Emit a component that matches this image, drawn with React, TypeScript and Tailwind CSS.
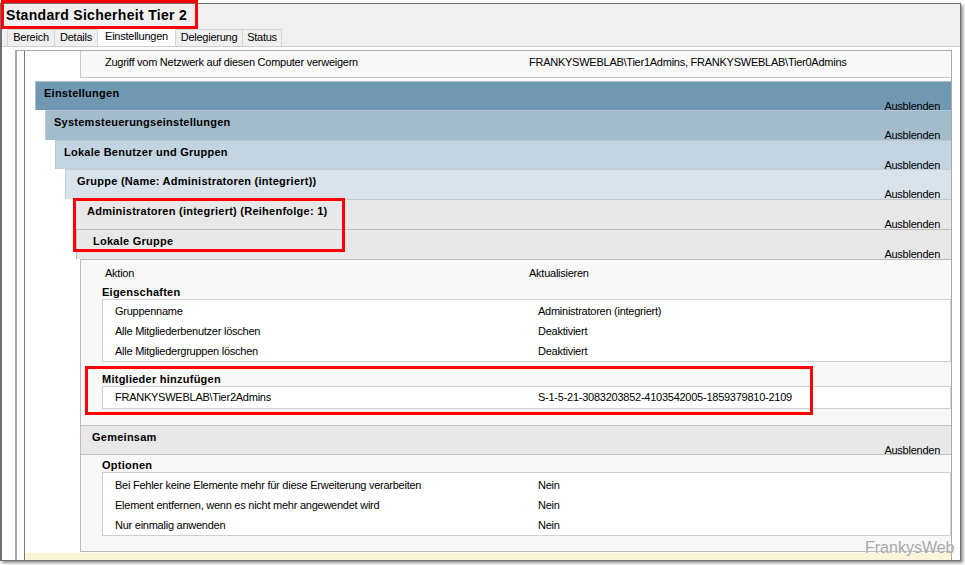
import React from 'react';

const tabs = [
  { label: 'Bereich', w: 'w-[47px]', active: false },
  { label: 'Details', w: 'w-[43px]', active: false },
  { label: 'Einstellungen', w: 'w-[78px]', active: true },
  { label: 'Delegierung', w: 'w-[67px]', active: false },
  { label: 'Status', w: 'w-[40px]', active: false },
];

const eigenschaften = [
  ['Gruppenname', 'Administratoren (integriert)'],
  ['Alle Mitgliederbenutzer löschen', 'Deaktiviert'],
  ['Alle Mitgliedergruppen löschen', 'Deaktiviert'],
];

const optionen = [
  ['Bei Fehler keine Elemente mehr für diese Erweiterung verarbeiten', 'Nein'],
  ['Element entfernen, wenn es nicht mehr angewendet wird', 'Nein'],
  ['Nur einmalig anwenden', 'Nein'],
];

function Bar({ title, className, textClass }: { title: string; className: string; textClass: string }) {
  return (
    <div className={`flex shrink-0 flex-col border-l border-t pt-[5px] ${className}`}>
      <div className={`font-bold leading-[13px] tracking-[0.25px] ${textClass}`}>{title}</div>
      <div className="mt-auto mr-[11px] -mb-[1px] self-end leading-[12px]">Ausblenden</div>
    </div>
  );
}

function Table({ rows, top }: { rows: string[][]; top: string }) {
  return (
    <div className={`ml-[21px] border border-[#d0d0d0] bg-white ${top}`}>
      {rows.map(([k, v]) => (
        <div key={k} className="flex h-[20px] items-center pl-[12px] leading-[20px]">
          <span className="w-[423px] shrink-0">{k}</span>
          <span>{v}</span>
        </div>
      ))}
    </div>
  );
}

export default function App() {
  return (
    <div className="relative h-[565px] w-[965px] overflow-hidden bg-white font-['Liberation_Sans',Arial,sans-serif] text-[11px] tracking-[-0.25px] text-black">
      <div className="mt-[3px] flex h-[558px] w-[961px] flex-col border-y border-r border-l-2 border-[#6f6f6f] bg-[#f0f0f0] shadow-[2px_2px_3px_rgba(0,0,0,0.45)]">
        <div className="h-[23px] shrink-0 pl-[4px] pt-[3px] text-[14px] font-bold leading-[17px] tracking-[0.3px]">
          Standard Sicherheit Tier 2
        </div>

        <div className="flex h-[19px] shrink-0 items-end pl-[5px]">
          {tabs.map((t, i) => (
            <div
              key={t.label}
              className={`${t.w} border-l border-t border-[#d4d4d4] text-center ${
                t.active ? 'h-[19px] bg-white pt-[2px] leading-[12px]' : 'h-[17px] bg-[#f0f0f0] pt-[1px] leading-[12px]'
              } ${i === tabs.length - 1 ? 'border-r' : ''}`}
            >
              {t.label}
            </div>
          ))}
        </div>

        <div className="flex min-h-0 flex-1 flex-col border-t border-[#cfcfcf] bg-white pl-[13px] pt-[3px]">
          <div className="flex min-h-0 w-[937px] flex-1 border-l-2 border-r border-t border-[#a9a9a9] pl-[7px]">
            <div className="flex min-h-0 w-[927px] flex-col overflow-hidden border-l border-[#7a7a7a]">
              {/* vorheriger Eintrag, angeschnitten */}
              <div className="ml-[55px] flex h-[27px] shrink-0 border-b border-l border-[#c8c8c8] bg-[#f8f8f8] pl-[24px] pt-[5px] leading-[13px]">
                <span className="w-[424px] shrink-0">Zugriff vom Netzwerk auf diesen Computer verweigern</span>
                <span>FRANKYSWEBLAB\Tier1Admins, FRANKYSWEBLAB\Tier0Admins</span>
              </div>

              <Bar title="Einstellungen" className="mt-[3px] ml-[10px] h-[29px] border-[#a9bccb] bg-[#7198b3]" textClass="pl-[8px]" />
              <Bar title="Systemsteuerungseinstellungen" className="ml-[20px] h-[30px] border-[#b7c6d2] bg-[#a4bbcc]" textClass="pl-[8px]" />
              <Bar title="Lokale Benutzer und Gruppen" className="ml-[30px] h-[29px] border-[#b9c7d1] bg-[#c2d4e0]" textClass="pl-[8px]" />
              <Bar title="Gruppe (Name: Administratoren (integriert))" className="ml-[40px] h-[30px] border-[#c2ccd4] bg-[#d9e3eb]" textClass="pl-[11px]" />

              <div className="relative ml-[50px] flex shrink-0 flex-col">
                <Bar title="Administratoren (integriert) (Reihenfolge: 1)" className="h-[30px] border-[#c6c6c6] bg-[#e8e8e8]" textClass="pl-[11px]" />
                <Bar title="Lokale Gruppe" className="ml-[1px] h-[30px] border-[#bdbdbd] bg-[#e8e8e8]" textClass="pl-[16px]" />
                <span className="absolute -left-[2px] -top-[1px] h-[54px] w-[272px] border-[3px] border-[#ff0000]" />
              </div>

              <div className="ml-[55px] flex shrink-0 flex-col border-y border-l border-[#bcbcbc] bg-[#f8f8f8]">
                <div className="flex flex-col pb-[16px] pt-[7px]">
                  <div className="flex pl-[24px] leading-[13px]">
                    <span className="w-[424px] shrink-0">Aktion</span>
                    <span>Aktualisieren</span>
                  </div>
                  <div className="ml-[21px] mt-[6px] font-bold leading-[13px] tracking-[0.25px]">Eigenschaften</div>
                  <Table rows={eigenschaften} top="pt-[1px]" />
                  <div className="relative mt-[11px]">
                    <div className="ml-[21px] font-bold leading-[13px] tracking-[0.25px]">Mitglieder hinzufügen</div>
                    <div className="ml-[21px] flex h-[23px] items-center border border-[#d0d0d0] bg-white pl-[12px] leading-[21px]">
                      <span className="w-[423px] shrink-0">FRANKYSWEBLAB\Tier2Admins</span>
                      <span>S-1-5-21-3083203852-4103542005-1859379810-2109</span>
                    </div>
                    <span className="absolute -top-[7px] left-[4px] h-[49px] w-[728px] border-[3px] border-[#ff0000]" />
                  </div>
                </div>

                <div className="flex h-[30px] flex-col border-y border-[#c0c0c0] bg-[#e8e8e8] pt-[5px]">
                  <div className="pl-[11px] font-bold leading-[13px] tracking-[0.25px]">Gemeinsam</div>
                  <div className="mt-auto mr-[11px] -mb-[1px] self-end leading-[12px]">Ausblenden</div>
                </div>

                <div className="flex flex-col pb-[15px] pt-[4px]">
                  <div className="ml-[21px] font-bold leading-[13px] tracking-[0.25px]">Optionen</div>
                  <Table rows={optionen} top="pt-[2px]" />
                </div>
              </div>

              <div className="mt-[1px] min-h-0 flex-1 bg-[#fcf4d8]" />
            </div>
          </div>
        </div>
      </div>

      <span className="absolute left-[1px] top-0 h-[29px] w-[197px] border-[3px] border-[#ff0000]" />
      <span className="absolute left-[865px] top-[539px] text-[16px] leading-[18px] tracking-normal text-[#a6a6a6] [text-shadow:0_0_2px_#fff]">
        FrankysWeb
      </span>
    </div>
  );
}
